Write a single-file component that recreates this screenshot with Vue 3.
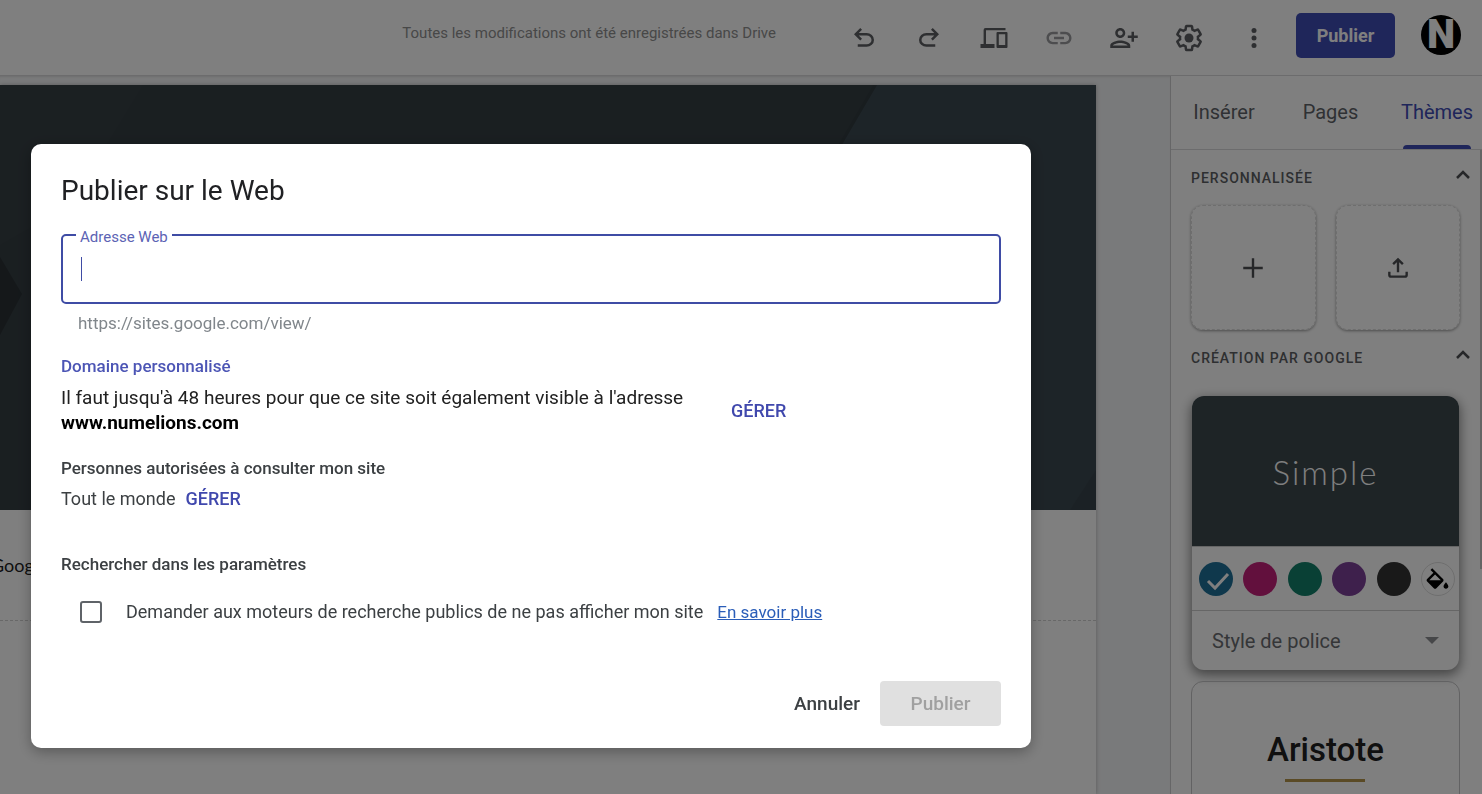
<script setup>
import { ref } from 'vue'

const address = ref('')
const noIndex = ref(false)
const activeTab = ref('Thèmes')
const tabs = ['Insérer', 'Pages', 'Thèmes']
const swatches = [
  { name: 'Bleu', color: '#1f7199', selected: true },
  { name: 'Rose', color: '#c4217a' },
  { name: 'Vert', color: '#12806a' },
  { name: 'Violet', color: '#7d4099' },
  { name: 'Noir', color: '#333333' },
]
</script>

<template>
  <div class="app">
    <header class="topbar">
      <p class="status">Toutes les modifications ont été enregistrées dans Drive</p>
      <nav class="tools">
        <button class="tool" aria-label="Annuler la modification">
          <svg viewBox="0 0 24 24"><path d="M7 19v-2h7.1q1.575 0 2.738-1Q18 15 18 13.5T16.838 11Q15.675 10 14.1 10H7.8l2.6 2.6L9 14 4 9l5-5 1.4 1.4L7.8 8h6.3q2.425 0 4.163 1.575Q20 11.15 20 13.5t-1.737 3.925Q16.525 19 14.1 19Z" /></svg>
        </button>
        <button class="tool" aria-label="Rétablir">
          <svg viewBox="0 0 24 24"><path d="M17 19v-2H9.900q-1.575 0-2.738-1Q6 15 6 13.500T7.162 11Q8.325 10 9.900 10h6.300l-2.600 2.600L15 14l5-5-5-5-1.400 1.400L16.200 8H9.900q-2.425 0-4.163 1.575Q4 11.150 4 13.500t1.737 3.925Q7.475 19 9.900 19Z" /></svg>
        </button>
        <button class="tool" aria-label="Aperçu">
          <svg viewBox="0 0 30 30"><path d="M6.500 5H26.500V7.200H7.000V21H15.500V25H1.500V21H4.600V7Q4.600 5 6.500 5ZM18.500 9H27.500Q28.500 9 28.500 10V24Q28.500 25 27.500 25H18.500Q17.500 25 17.500 24V10Q17.500 9 18.500 9ZM19.800 11.200V22H26.200V11.200Z" fill-rule="evenodd" /></svg>
        </button>
        <button class="tool faded" aria-label="Copier le lien">
          <svg viewBox="0 0 24 24"><path d="M3.900 12c0-1.710 1.390-3.100 3.100-3.100h4V7H7c-2.760 0-5 2.240-5 5s2.240 5 5 5h4v-1.900H7c-1.710 0-3.100-1.390-3.100-3.100zM8 13h8v-2H8v2zm9-6h-4v1.900h4c1.710 0 3.100 1.390 3.100 3.100s-1.390 3.100-3.100 3.100h-4V17h4c2.760 0 5-2.240 5-5s-2.240-5-5-5z" /></svg>
        </button>
        <button class="tool" aria-label="Partager">
          <svg viewBox="0 0 24 24"><path d="M13 8c0-2.210-1.790-4-4-4S5 5.790 5 8s1.790 4 4 4 4-1.790 4-4zm-2 0c0 1.100-.9 2-2 2s-2-.9-2-2 .9-2 2-2 2 .9 2 2zM1 18v2h16v-2c0-2.660-5.330-4-8-4s-8 1.340-8 4zm2 0c.2-.71 3.300-2 6-2 2.690 0 5.770 1.280 6 2H3zM20 15v-3h3v-2h-3V7h-2v3h-3v2h3v3h2z" /></svg>
        </button>
        <button class="tool" aria-label="Paramètres">
          <svg viewBox="0 0 24 24">
            <path class="outline" d="M19.140 12.940c.04-.3.06-.61.06-.94 0-.32-.02-.64-.07-.94l2.030-1.580c.18-.14.23-.41.12-.61l-1.920-3.320c-.12-.22-.37-.29-.59-.22l-2.390.96c-.5-.38-1.030-.7-1.620-.94l-.36-2.540c-.04-.24-.24-.41-.48-.41h-3.840c-.24 0-.43.17-.47.41l-.36 2.540c-.59.24-1.130.57-1.620.94l-2.390-.96c-.22-.08-.47 0-.59.22L2.740 8.870c-.12.21-.08.47.12.61l2.030 1.580c-.05.3-.09.63-.09.94s.02.64.07.94l-2.030 1.580c-.18.14-.23.41-.12.61l1.920 3.320c.12.22.37.29.59.22l2.390-.96c.5.38 1.030.7 1.620.94l.36 2.540c.05.24.24.41.48.41h3.840c.24 0 .44-.17.47-.41l.36-2.540c.59-.24 1.130-.56 1.620-.94l2.390.96c.22.08.47 0 .59-.22l1.920-3.320c.12-.22.07-.47-.12-.61z" />
            <circle cx="12" cy="12" r="3.600" />
          </svg>
        </button>
        <button class="tool" aria-label="Plus d'options">
          <svg viewBox="0 0 24 24"><circle cx="12" cy="6" r="2" /><circle cx="12" cy="12" r="2" /><circle cx="12" cy="18" r="2" /></svg>
        </button>
      </nav>
      <button class="publish-top">Publier</button>
      <div class="avatar">N</div>
    </header>

    <div class="workspace">
      <main class="canvas">
        <article class="page">
          <div class="banner">
            <svg viewBox="0 0 1096 425" preserveAspectRatio="none">
              <rect width="1096" height="425" fill="#353e43" />
              <polygon points="0,0 143,0 70,120 0,160" fill="#374045" />
              <polygon points="0,172 22,209 0,250" fill="#2a3135" />
              <polygon points="877,0 1096,0 1096,425 720,425 800,130" fill="#3b4850" />
              <path d="M875 0L840 60" stroke="#313a3f" stroke-width="3" />
              <polygon points="1096,385 1096,425 1070,425" fill="#37434a" />
            </svg>
          </div>
          <section class="text-block"><p>Goog</p></section>
        </article>
      </main>

      <aside class="sidebar">
        <div class="tabs" role="tablist">
          <button
            v-for="tab in tabs"
            :key="tab"
            class="tab"
            :class="{ active: tab === activeTab }"
            role="tab"
            :aria-selected="tab === activeTab"
            @click="activeTab = tab"
          >{{ tab }}</button>
        </div>
        <div class="panel">
          <div class="themes">
            <h2 class="section-head">
              PERSONNALISÉE
              <svg viewBox="0 0 16 10"><path d="M2 8L8 2L14 8" /></svg>
            </h2>
            <div class="custom">
              <button class="tile" aria-label="Créer un thème">
                <svg viewBox="0 0 24 24"><path d="M12 3V21M3 12H21" /></svg>
              </button>
              <button class="tile" aria-label="Importer un thème">
                <svg viewBox="0 0 24 24"><path d="M12 16V4.500M7.500 8.500L12 4L16.500 8.500M4 15.500V18.500Q4 20 5.500 20H18.500Q20 20 20 18.500V15.500" /></svg>
              </button>
            </div>
            <h2 class="section-head">
              CRÉATION PAR GOOGLE
              <svg viewBox="0 0 16 10"><path d="M2 8L8 2L14 8" /></svg>
            </h2>
            <div class="theme selected">
              <div class="theme-banner">Simple</div>
              <div class="swatches">
                <button
                  v-for="s in swatches"
                  :key="s.name"
                  class="swatch"
                  :style="{ background: s.color }"
                  :aria-label="s.name"
                >
                  <svg v-if="s.selected" viewBox="0 0 34 34"><path d="M9 19L16 26L29 12" /></svg>
                </button>
                <button class="swatch custom-color" aria-label="Couleur personnalisée">
                  <svg viewBox="0 -3.500 24 24"><path d="M16.560 8.940L7.620 0 6.210 1.410l2.380 2.380-5.150 5.150c-.59.59-.59 1.540 0 2.120l5.500 5.500c.29.29.68.44 1.060.44s.77-.15 1.060-.44l5.500-5.500c.59-.58.59-1.530 0-2.120zM5.210 10L10 5.210 14.790 10H5.210zM19 11.500s-2 2.170-2 3.500c0 1.100.9 2 2 2s2-.9 2-2c0-1.330-2-3.500-2-3.500z" /></svg>
                </button>
              </div>
              <button class="font-style">
                Style de police
                <svg viewBox="0 0 14 7"><path d="M0 0H14L7 7Z" /></svg>
              </button>
            </div>
            <div class="theme plain">
              <span class="aristote">Aristote</span>
            </div>
          </div>
          <div class="scroll-track"><div class="scroll-thumb"></div></div>
        </div>
      </aside>
    </div>

    <div class="scrim">
      <form class="dialog" role="dialog" aria-labelledby="dialog-title" @submit.prevent>
        <h1 id="dialog-title">Publier sur le Web</h1>
        <div class="field">
          <input id="web-address" v-model="address" type="text" />
          <label for="web-address">Adresse Web</label>
          <span class="caret"></span>
        </div>
        <p class="helper">https://sites.google.com/view/</p>

        <h2 class="sub accent">Domaine personnalisé</h2>
        <div class="domain">
          <p>Il faut jusqu'à 48 heures pour que ce site soit également visible à l'adresse <strong>www.numelions.com</strong></p>
          <button class="manage" type="button">GÉRER</button>
        </div>

        <h2 class="sub viewers">Personnes autorisées à consulter mon site</h2>
        <div class="everyone">
          <span>Tout le monde</span>
          <button class="manage" type="button">GÉRER</button>
        </div>

        <h2 class="sub search">Rechercher dans les paramètres</h2>
        <div class="check">
          <input id="no-index" v-model="noIndex" type="checkbox" />
          <label for="no-index">Demander aux moteurs de recherche publics de ne pas afficher mon site</label>
          <a href="#">En savoir plus</a>
        </div>

        <div class="actions">
          <button class="cancel" type="button">Annuler</button>
          <button class="submit" disabled>Publier</button>
        </div>
      </form>
    </div>
  </div>
</template>

<style>
body {
  overflow: hidden;
}
</style>

<style scoped>
.app {
  height: 100vh;
  display: flex;
  flex-direction: column;
  overflow: hidden;
  background: #fff;
  font-family: Roboto, "Liberation Sans", sans-serif;
  color: #3c4043;
}
.app * {
  box-sizing: border-box;
}
button {
  font: inherit;
  color: inherit;
  background: none;
  border: 0;
  padding: 0;
  cursor: pointer;
}
h1, h2, p {
  margin: 0;
}
svg {
  display: block;
}

.topbar {
  flex: none;
  height: 76px;
  padding-right: 21px;
  display: flex;
  justify-content: flex-end;
  border-bottom: 1px solid #d8d8da;
}
.status {
  margin-right: 55px;
  padding-top: 23px;
  font-size: 15px;
  line-height: 20px;
  color: #909090;
}
.tools {
  display: flex;
  margin-right: 10px;
}
.tool {
  width: 65px;
  height: 76px;
  display: grid;
  place-items: center;
}
.tool svg {
  width: 30px;
  height: 30px;
  fill: #5c5e62;
}
.tool .outline {
  fill: none;
  stroke: #5c5e62;
  stroke-width: 2;
}
.tool.faded svg {
  fill: #9a9b9e;
}
.publish-top {
  width: 99px;
  height: 45px;
  margin: 13px 26px 0 0;
  border-radius: 5px;
  background: #3f4cb5;
  color: #fff;
  font-size: 18px;
  font-weight: 700;
}
.avatar {
  width: 40px;
  height: 40px;
  margin-top: 15px;
  border-radius: 50%;
  background: #000;
  color: #fff;
  text-align: center;
  font-size: 40px;
  line-height: 40px;
  font-weight: 900;
}

.workspace {
  flex: 1;
  min-height: 0;
  display: flex;
}
.canvas {
  flex: 1;
  min-width: 0;
  padding: 9px 74px 0 0;
  background: #f3f4f6;
  box-shadow: inset 0 2px 2px -1px #ddd;
}
.page {
  height: 100%;
  background: #fff;
  box-shadow: 0 0 4px #b0b0b0;
}
.banner {
  height: 425px;
}
.banner svg {
  width: 100%;
  height: 100%;
}
.text-block {
  height: 111px;
  padding-top: 43px;
  border-bottom: 1px dashed #d0d0d0;
  font-family: Lato, sans-serif;
  font-size: 18px;
  line-height: 24px;
  color: #212121;
}
.text-block p {
  text-indent: -9px;
}

.sidebar {
  flex: none;
  width: 312px;
  display: flex;
  flex-direction: column;
  overflow: hidden;
  border-left: 1px solid #ccccce;
  background: #fff;
}
.tabs {
  flex: none;
  height: 74px;
  display: grid;
  grid-template-columns: 106px 107px 106px;
  border-bottom: 1px solid #d8d8da;
}
.tab {
  display: flex;
  flex-direction: column;
  align-items: center;
  justify-content: space-between;
  font-size: 20px;
  line-height: 72px;
  color: #5f6368;
}
.tab.active {
  color: #3f4cb5;
}
.tab.active::after {
  content: "";
  width: 68px;
  height: 4px;
  margin-top: -4px;
  border-radius: 4px 4px 0 0;
  background: #3f4cb5;
}
.panel {
  flex: 1;
  min-height: 0;
  display: flex;
}
.themes {
  flex: 1;
  min-width: 0;
  padding: 18px 20px 0;
}
.section-head {
  display: flex;
  justify-content: space-between;
  align-items: flex-start;
  height: 20px;
  margin-right: -11px;
  font-size: 14px;
  line-height: 20px;
  font-weight: 500;
  letter-spacing: 1px;
  color: #5c5e62;
}
.section-head svg {
  width: 16px;
  height: 10px;
  margin-top: 2px;
  fill: none;
  stroke: #4c4e52;
  stroke-width: 2.500;
}
.custom {
  display: grid;
  grid-template-columns: 1fr 1fr;
  gap: 20px;
  margin: 17px 0 18px;
}
.tile {
  height: 125px;
  display: grid;
  place-items: center;
  border: 1px dashed #ddd;
  border-radius: 12px;
  box-shadow: 0 1px 3px #999;
}
.tile svg {
  width: 26px;
  height: 26px;
  fill: none;
  stroke: #4c4e52;
  stroke-width: 2.200;
}
.theme {
  border-radius: 12px;
  overflow: hidden;
}
.selected {
  margin: 28px 1px 11px;
  box-shadow: 0 4px 12px 1px #888;
}
.theme-banner {
  height: 150px;
  background: #3c484d;
  color: #fff;
  font-family: Lato, sans-serif;
  font-size: 33px;
  font-weight: 300;
  line-height: 152px;
  letter-spacing: 2px;
  text-align: center;
}
.swatches {
  height: 65px;
  padding: 0 4px 0 7px;
  display: flex;
  align-items: center;
  justify-content: space-between;
  border-top: 1px solid #ccc;
  border-bottom: 1px solid #ccc;
}
.swatch {
  width: 34px;
  height: 34px;
  border-radius: 50%;
  display: grid;
  place-items: center;
}
.swatch svg {
  width: 34px;
  height: 34px;
  fill: none;
  stroke: #fff;
  stroke-width: 3;
}
.custom-color {
  border: 1px solid #ddd;
}
.custom-color svg {
  width: 29px;
  height: 29px;
  fill: #000;
  stroke: none;
}
.font-style {
  width: 100%;
  height: 59px;
  padding: 0 20px;
  display: flex;
  align-items: center;
  justify-content: space-between;
  font-size: 20px;
  color: #6a6d71;
}
.font-style svg {
  width: 14px;
  height: 7px;
  fill: #8d8f92;
}
.plain {
  height: 150px;
  padding-top: 44px;
  display: flex;
  justify-content: center;
  align-items: flex-start;
  border: 1px solid #c4c4c6;
}
.aristote {
  display: flex;
  flex-direction: column;
  align-items: center;
  font-size: 33px;
  line-height: 48px;
  font-weight: 500;
  color: #212121;
}
.aristote::after {
  content: "";
  width: 80px;
  height: 3px;
  margin-top: 5px;
  background: #b5954a;
}
.scroll-track {
  flex: none;
  width: 2px;
}
.scroll-thumb {
  height: 65%;
  background: #c8c8c8;
}

.scrim {
  position: fixed;
  inset: 0;
  padding: 144px 31px 0;
  background: rgba(0, 0, 0, 0.5);
}
.dialog {
  max-width: 1000px;
  padding: 30px 30px 22px;
  border-radius: 10px;
  background: #fff;
  box-shadow: 0 4px 14px rgba(0, 0, 0, 0.3);
}
h1 {
  font-size: 28px;
  line-height: 34px;
  font-weight: 400;
  color: #202124;
}
.field {
  position: relative;
  margin-top: 26px;
}
.field input {
  display: block;
  width: 100%;
  height: 70px;
  padding: 0 18px;
  border: 2px solid #3f4ca5;
  border-radius: 5px;
  outline: 0;
  font: inherit;
  font-size: 20px;
  background: #fff;
}
.field label {
  position: absolute;
  top: -7px;
  left: 15px;
  padding: 0 4px;
  background: #fff;
  color: #5c63b4;
  font-size: 15px;
  line-height: 20px;
}
.caret {
  position: absolute;
  top: 23px;
  left: 20px;
  width: 1px;
  height: 24px;
  background: #3f4ca5;
}
.helper {
  margin: 9px 0 0 17px;
  font-size: 17px;
  line-height: 20px;
  color: #80868b;
}
.sub {
  font-size: 17px;
  line-height: 20px;
  font-weight: 500;
}
.accent {
  margin-top: 23px;
  color: #4c55b5;
}
.domain {
  display: flex;
  align-items: center;
  gap: 20px;
  margin-top: 9px;
  font-size: 19px;
  line-height: 25px;
  color: #212121;
}
.domain p {
  width: 650px;
}
.domain strong {
  display: block;
  font-weight: 700;
  color: #000;
}
.manage {
  color: #4048ad;
  font-size: 18px;
  font-weight: 500;
}
.viewers {
  margin-top: 23px;
}
.everyone {
  display: flex;
  align-items: center;
  gap: 10px;
  margin-top: 8px;
  font-size: 18px;
  line-height: 25px;
}
.search {
  margin-top: 43px;
}
.check {
  display: flex;
  align-items: center;
  margin: 25px 0 0 19px;
  line-height: 26px;
}
.check input {
  appearance: none;
  width: 22px;
  height: 22px;
  margin: 0 24px 0 0;
  border: 2px solid #5f6368;
  border-radius: 3px;
}
.check label {
  font-size: 18px;
}
.check a {
  margin-left: 14px;
  font-size: 17px;
  color: #2a5db8;
}
.actions {
  display: flex;
  justify-content: flex-end;
  gap: 20px;
  margin-top: 56px;
  font-size: 19px;
  font-weight: 500;
}
.submit {
  width: 121px;
  height: 45px;
  border-radius: 4px;
  background: #e0e0e0;
  color: #a0a0a0;
}
</style>
